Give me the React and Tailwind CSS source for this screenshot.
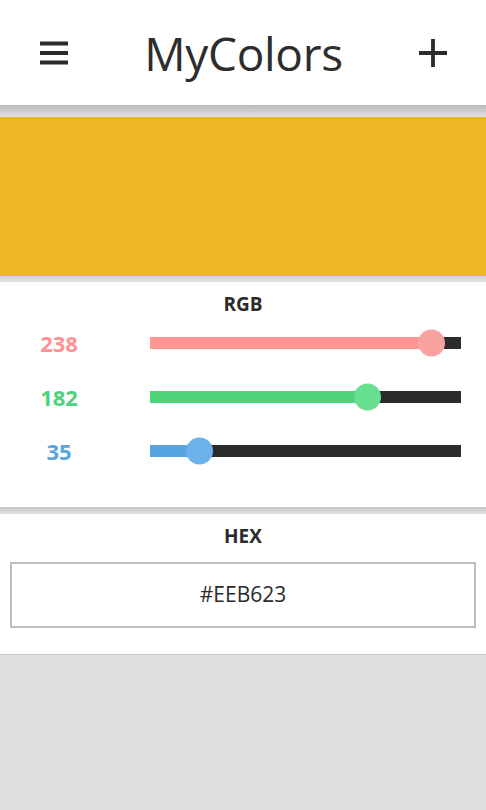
import React from 'react'

const channels = [
  { value: 238, text: 'text-[#ff9191]', fill: 'bg-[#ff9494]', thumb: 'bg-[#f9a3a1]' },
  { value: 182, text: 'text-[#4cd37a]', fill: 'bg-[#4ed37b]', thumb: 'bg-[#67df8f]' },
  { value: 35, text: 'text-[#58a5e4]', fill: 'bg-[#57a4e3]', thumb: 'bg-[#6bb2ec]' },
]

function MenuIcon() {
  return (
    <svg width="30" height="24" viewBox="0 0 30 24" className="text-[#2b2b2b]">
      <path d="M1 2.5h28M1 12h28M1 21.5h28" stroke="currentColor" strokeWidth="3.8" />
    </svg>
  )
}

function PlusIcon() {
  return (
    <svg width="30" height="30" viewBox="0 0 30 30" className="text-[#2b2b2b]">
      <path d="M15 1v28M1 15h28" stroke="currentColor" strokeWidth="3.8" />
    </svg>
  )
}

function Slider({ value, fill, thumb }) {
  const left = -3.5 + (value / 255) * 291.4
  return (
    <div className="relative h-[12px] flex-1 bg-[#2b2b2b]">
      <div className={`absolute left-0 top-0 h-full ${fill}`} style={{ width: left + 13.5 }} />
      <div
        className={`absolute top-1/2 h-[27px] w-[27px] -translate-y-1/2 rounded-full ${thumb}`}
        style={{ left }}
      />
    </div>
  )
}

export default function App() {
  return (
    <div className="flex min-h-[810px] flex-col bg-white font-['Open_Sans',sans-serif] text-[#2b2b2b]">
      <header className="flex h-[105px] items-center justify-between pl-[39px] pr-[38px]">
        <MenuIcon />
        <h1 className="text-[46px] leading-none tracking-[-0.3px] text-[#2d2d2d]">MyColors</h1>
        <PlusIcon />
      </header>
      <div className="h-[12px] bg-linear-to-b from-[#bababa] to-[#e3e3e3]" />

      <div className="h-[159px] bg-[#eeb623]" />
      <div className="h-[6px] bg-linear-to-b from-[#d2d2d2] to-[#e4e4e4]" />

      <section className="pt-[10px] pb-[29px]">
        <h2 className="flex h-[24px] items-center justify-center text-[19px] font-bold">RGB</h2>
        {channels.map((c) => (
          <div key={c.value} className="flex h-[54px] items-center pr-[25px]">
            <span className={`w-[118px] text-center text-[22px] font-bold ${c.text}`}>{c.value}</span>
            <div className="ml-[32px] flex flex-1">
              <Slider value={c.value} fill={c.fill} thumb={c.thumb} />
            </div>
          </div>
        ))}
      </section>
      <div className="h-[7px] bg-linear-to-b from-[#c6c6c6] to-[#e2e2e2]" />

      <section className="px-[10px] pt-[10px] pb-[26px]">
        <h2 className="flex h-[24px] items-center justify-center text-[19px] font-bold">HEX</h2>
        <div className="mt-[14px] flex h-[66px] items-center justify-center border-2 border-[#bdbdbd] text-[21px]">
          #EEB623
        </div>
      </section>
      <div className="flex-1 border-t border-[#c9c9c9] bg-[#dfdfdf]" />
    </div>
  )
}
